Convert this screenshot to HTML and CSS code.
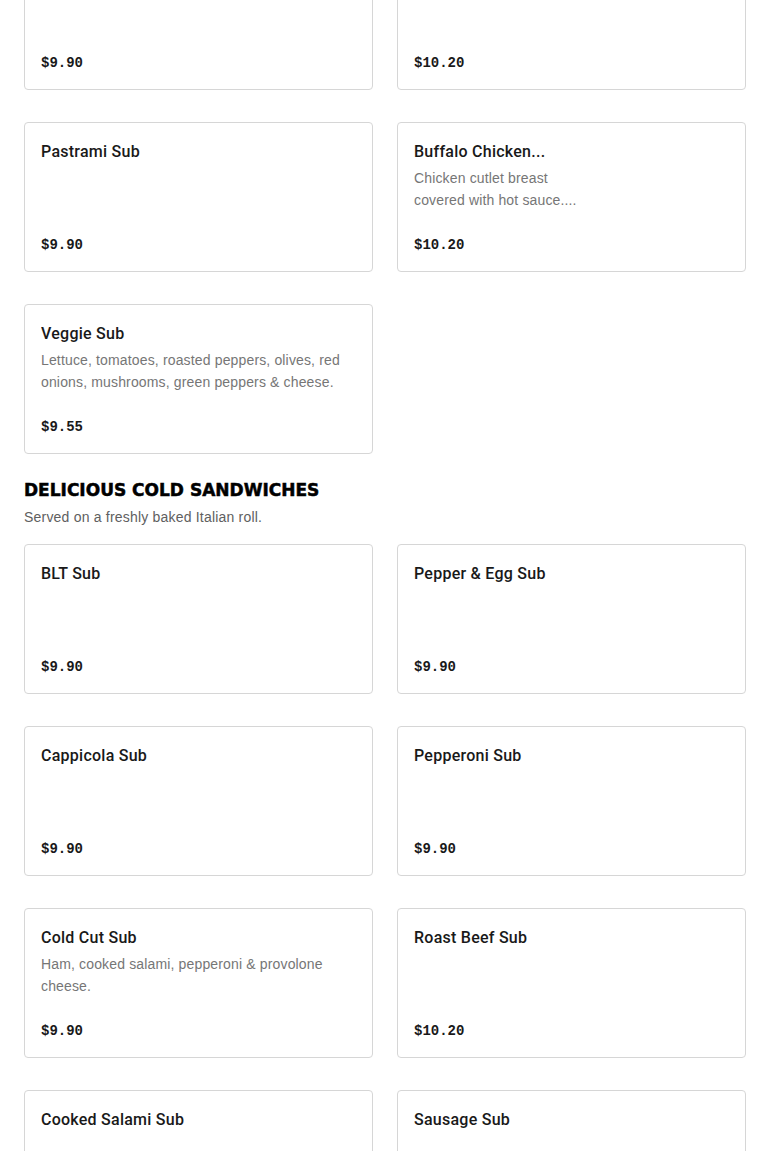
FILE: index.html
```html
<!DOCTYPE html>
<html lang="en">
<head>
<meta charset="utf-8">
<title>Menu</title>
<link rel="stylesheet" href="styles.css">
</head>
<body>
<main class="page">
  <section class="section section-first">
    <div class="grid">
      <div class="card">
        <div class="card-text"><h3 class="title">Meatball Sub</h3></div>
        <div class="price">$9.90</div>
      </div>
      <div class="card">
        <div class="card-text"><h3 class="title">Chicken Parm Sub</h3></div>
        <div class="price">$10.20</div>
      </div>
      <div class="card">
        <div class="card-text"><h3 class="title">Pastrami Sub</h3></div>
        <div class="price">$9.90</div>
      </div>
      <div class="card">
        <div class="card-text card-text-narrow">
          <h3 class="title">Buffalo Chicken...</h3>
          <p class="desc">Chicken cutlet breast covered with hot sauce....</p>
        </div>
        <div class="price">$10.20</div>
      </div>
      <div class="card">
        <div class="card-text">
          <h3 class="title">Veggie Sub</h3>
          <p class="desc">Lettuce, tomatoes, roasted peppers, olives, red onions, mushrooms, green peppers &amp; cheese.</p>
        </div>
        <div class="price">$9.55</div>
      </div>
    </div>
  </section>

  <section class="section">
    <h2 class="section-title">DELICIOUS COLD SANDWICHES</h2>
    <p class="section-sub">Served on a freshly baked Italian roll.</p>
    <div class="grid">
      <div class="card">
        <div class="card-text"><h3 class="title">BLT Sub</h3></div>
        <div class="price">$9.90</div>
      </div>
      <div class="card">
        <div class="card-text"><h3 class="title">Pepper &amp; Egg Sub</h3></div>
        <div class="price">$9.90</div>
      </div>
      <div class="card">
        <div class="card-text"><h3 class="title">Cappicola Sub</h3></div>
        <div class="price">$9.90</div>
      </div>
      <div class="card">
        <div class="card-text"><h3 class="title">Pepperoni Sub</h3></div>
        <div class="price">$9.90</div>
      </div>
      <div class="card">
        <div class="card-text">
          <h3 class="title">Cold Cut Sub</h3>
          <p class="desc">Ham, cooked salami, pepperoni &amp; provolone cheese.</p>
        </div>
        <div class="price">$9.90</div>
      </div>
      <div class="card">
        <div class="card-text"><h3 class="title">Roast Beef Sub</h3></div>
        <div class="price">$10.20</div>
      </div>
      <div class="card">
        <div class="card-text"><h3 class="title">Cooked Salami Sub</h3></div>
        <div class="price">$9.90</div>
      </div>
      <div class="card">
        <div class="card-text"><h3 class="title">Sausage Sub</h3></div>
        <div class="price">$9.90</div>
      </div>
    </div>
  </section>
</main>
</body>
</html>
```

FILE: styles.css
```css
* { box-sizing: border-box; }

html, body {
  margin: 0;
  padding: 0;
  background: #ffffff;
}

body {
  font-family: "Liberation Sans", Arial, sans-serif;
  color: #191919;
}

.page {
  padding: 0 24px;
}

.section-first {
  margin-top: -60px;
}

.grid {
  display: grid;
  grid-template-columns: 1fr 1fr;
  column-gap: 24px;
  row-gap: 32px;
}

.card {
  height: 150px;
  border: 1px solid #d6d6d6;
  border-radius: 4px;
  padding: 17px 16px 15px;
  display: flex;
  flex-direction: column;
  background: #fff;
}

.card-text-narrow {
  max-width: 185px;
}

.title {
  margin: 0;
  font-family: Roboto, "Liberation Sans", sans-serif;
  font-size: 16px;
  line-height: 24px;
  font-weight: 500;
  letter-spacing: 0.25px;
  color: #191919;
  white-space: nowrap;
  overflow: hidden;
}

.desc {
  margin: 3px 0 0;
  font-size: 14px;
  line-height: 22px;
  letter-spacing: 0.15px;
  color: #767676;
}

.price {
  margin-top: auto;
  font-family: "Liberation Mono", "DejaVu Sans Mono", monospace;
  font-weight: 700;
  font-size: 14px;
  line-height: 22px;
  color: #191919;
}

.section-title {
  margin: 24px 0 0;
  font-family: "DejaVu Sans", sans-serif;
  font-weight: 900;
  font-size: 17px;
  line-height: 24px;
  color: #000;
  -webkit-text-stroke: 0.5px #000;
}

.section-sub {
  margin: 4px 0 16px;
  font-size: 14px;
  line-height: 22px;
  letter-spacing: 0.2px;
  color: #606060;
}
```
